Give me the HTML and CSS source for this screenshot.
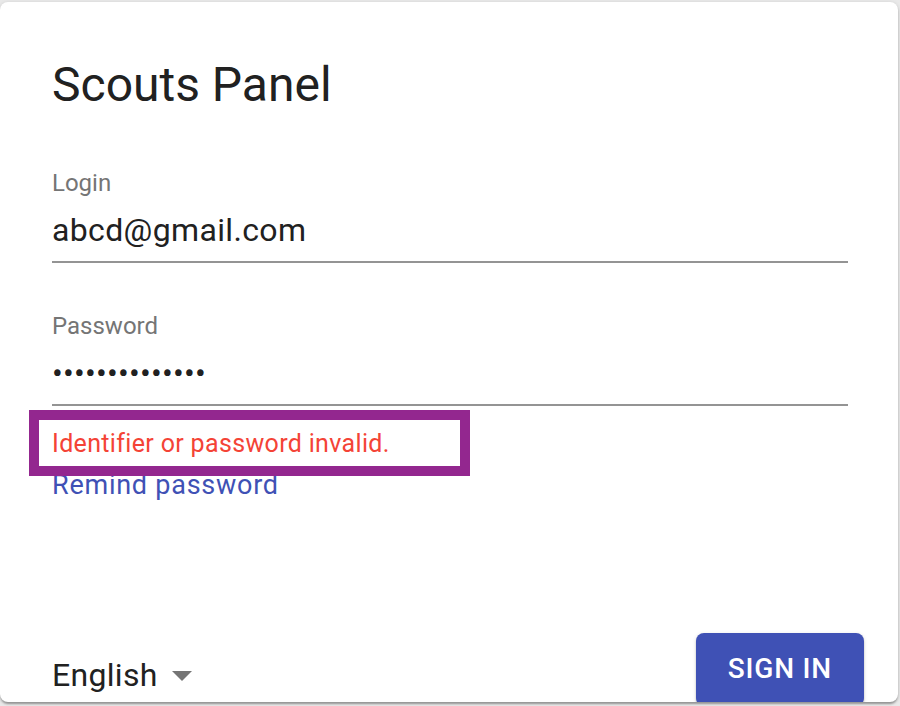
FILE: index.html
```html
<!DOCTYPE html>
<html lang="en">
<head>
<meta charset="utf-8">
<title>Scouts Panel</title>
<link rel="stylesheet" href="styles.css">
</head>
<body>
<div class="card">
  <h1 class="title">Scouts Panel</h1>
  <div class="field field-login">
    <label class="label">Login</label>
    <div class="value">abcd@gmail.com</div>
  </div>
  <div class="field field-password">
    <label class="label">Password</label>
    <div class="value dots">••••••••••••••</div>
  </div>
  <p class="error">Identifier or password invalid.</p>
  <a class="link" href="#">Remind password</a>
  <div class="footer">
    <div class="select">
      <span class="select-text">English</span>
      <svg class="select-icon" viewBox="0 0 24 24" width="48" height="48"><path d="M7 10l5 5 5-5z" fill="#757575"/></svg>
    </div>
    <button class="btn" type="button">SIGN IN</button>
  </div>
  <div class="highlight"></div>
</div>
</body>
</html>
```

FILE: styles.css
```css
html, body {
  margin: 0;
  padding: 0;
}
body {
  background: #e9e9e9;
  font-family: Roboto, "Liberation Sans", Arial, sans-serif;
  height: 706px;
  overflow: hidden;
}
.card {
  position: relative;
  box-sizing: border-box;
  margin-top: 2px;
  width: 898px;
  height: 700px;
  background: #fff;
  border-radius: 8px;
  overflow: hidden;
  padding: 55px 50px 0 52px;
  box-shadow: 0 2px 2px rgba(0,0,0,0.2), 0 1px 4px rgba(0,0,0,0.14), 0 4px 2px -2px rgba(0,0,0,0.12);
}
.title {
  margin: 0;
  font-size: 48px;
  line-height: 56px;
  font-weight: 400;
  color: #212121;
}
.field {
  border-bottom: 2px solid #949494;
  padding-bottom: 12px;
}
.field-login {
  margin-top: 56px;
}
.field-password {
  margin-top: 49px;
}
.label {
  display: block;
  font-size: 24px;
  line-height: 28px;
  color: #757575;
  margin-bottom: 14px;
}
.value {
  font-size: 32px;
  line-height: 38px;
  letter-spacing: 0.35px;
  color: #212121;
}
.dots {
  letter-spacing: 0.2px;
}
.error {
  margin: 23px 0 0;
  font-size: 25px;
  line-height: 30px;
  letter-spacing: 0.34px;
  color: #f44336;
}
.link {
  display: block;
  margin-top: 11px;
  font-size: 27px;
  line-height: 30px;
  letter-spacing: 0.75px;
  color: #3f51b5;
  text-decoration: none;
}
.footer {
  display: flex;
  justify-content: space-between;
  align-items: flex-start;
  margin-top: 133px;
  margin-right: -16px;
}
.select {
  display: flex;
  align-items: center;
  height: 48px;
  margin-top: 18px;
}
.select-text {
  font-size: 32px;
  line-height: 38px;
  letter-spacing: 0.3px;
  color: #212121;
}
.select-icon {
  display: block;
}
.btn {
  border: none;
  border-radius: 8px;
  background: #3f51b5;
  color: #fff;
  font-family: Roboto, "Liberation Sans", Arial, sans-serif;
  font-weight: 500;
  font-size: 28px;
  line-height: 49px;
  letter-spacing: 0.8px;
  padding: 11px 32px 13px;
  box-shadow: 0 2px 2px rgba(0,0,0,0.2), 0 1px 4px rgba(0,0,0,0.12);
}
.highlight {
  position: absolute;
  left: 29px;
  top: 408px;
  width: 421px;
  height: 46px;
  border: 10px solid #93278f;
  pointer-events: none;
}
```
